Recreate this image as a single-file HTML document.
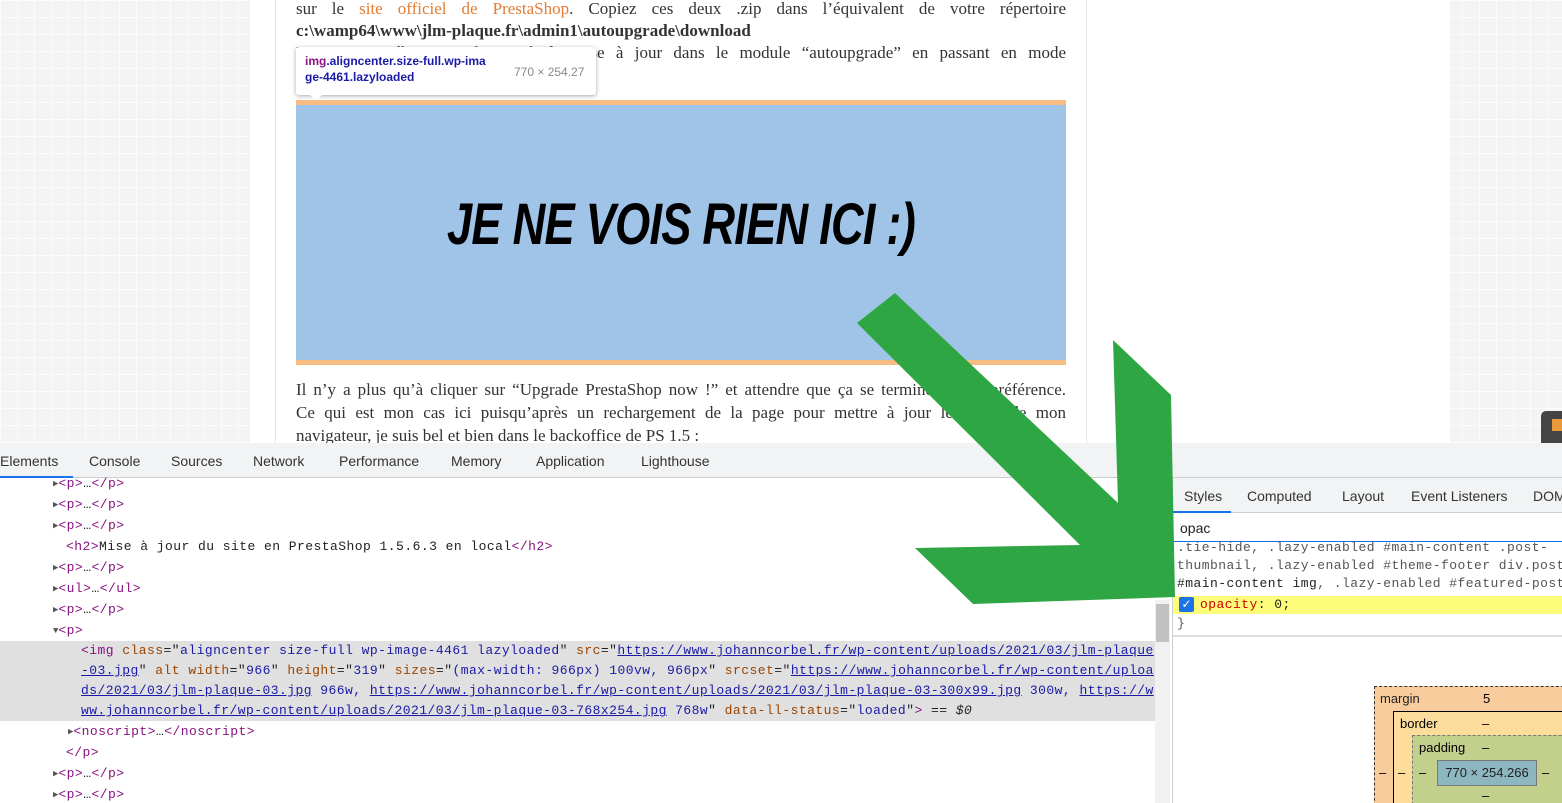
<!DOCTYPE html>
<html><head><meta charset="utf-8">
<style>
*{margin:0;padding:0;box-sizing:border-box}
html,body{width:1562px;height:803px;overflow:hidden}
body{position:relative;font-family:"Liberation Sans",sans-serif;
background-color:#f4f4f4;
background-image:linear-gradient(90deg,rgba(255,255,255,.7) 1px,transparent 1px),linear-gradient(rgba(255,255,255,.7) 1px,transparent 1px);
background-size:17px 17px;}
.abs{position:absolute}
.col{left:250px;top:0;width:1200px;height:443px;background:#fff}
.card{left:275px;top:0;width:812px;height:443px;border-left:1px solid #e4e4e4;border-right:1px solid #e4e4e4;background:#fff}
.ser{font-family:"Liberation Serif",serif;font-size:17px;color:#333;line-height:23px;left:296px;width:770px;text-align:justify;text-align-last:justify;white-space:nowrap}
.img{left:296px;top:100px;width:770px;height:265px;background:#9fc4e8;border-top:5px solid #f6bc82;border-bottom:5px solid #f6bc82;overflow:hidden}
.img span{position:absolute;left:0;right:0;top:86px;text-align:center;font:italic bold 58px "Liberation Sans",sans-serif;letter-spacing:-1px;color:#000;transform:scaleX(.78)}
.tip{left:296px;top:47px;width:300px;height:48px;background:#fff;border-radius:3px;box-shadow:0 1px 4px rgba(0,0,0,.35);font-size:12px;line-height:16px;padding:6px 9px}
.dev{left:0;top:443px;width:1562px;height:360px;background:#fff;border-top:1px solid #cbcdd1}
.tabs{left:0;top:443px;width:1562px;height:35px;background:#f1f3f4;border-bottom:1px solid #cbcdd1;font-size:14px;color:#333}
.tabs span{position:absolute;top:10px}
.el{font-family:"Liberation Mono",monospace;font-size:13px;letter-spacing:.45px;color:#222;line-height:21px;white-space:nowrap}
.rows>div{height:21px;line-height:21px}
.rows>div.hl{height:80px;line-height:20px}
.tag{color:#881280}.an{color:#994500}.av{color:#1a1aa6}.lk{color:#1a1aa6;text-decoration:underline}
.tri{font-size:9px;color:#555;letter-spacing:0;line-height:10px;vertical-align:1px}
.side{left:1172px;top:478px;width:390px;height:325px;border-left:1px solid #cbcdd1;background:#fff;overflow:hidden}
</style></head><body>
<div class="abs col"></div>
<div class="abs card"></div>
<div class="abs" style="left:1541px;top:411px;width:21px;height:32px;background:#444;border-radius:5px 0 0 0"></div>
<div class="abs" style="left:1552px;top:419px;width:10px;height:12px;background:#e99a3c"></div>

<div class="abs ser" style="top:-3px">sur le <span style="color:#e57c32">site officiel de PrestaShop</span>. Copiez ces deux .zip dans l’équivalent de votre répertoire</div>
<div class="abs ser" style="top:19px;text-align-last:left;font-weight:bold;color:#333">c:\wamp64\www\jlm-plaque.fr\admin1\autoupgrade\download</div>
<div class="abs ser" style="top:41px">Ensuite on sélectionne le canal de mise à jour dans le module “autoupgrade” en passant en mode</div>
<div class="abs tip"><div style="width:200px;font-weight:bold"><span style="color:#881280">img</span><span style="color:#1a1aa6">.aligncenter.size-full.wp-ima ge-4461.lazyloaded</span></div><div class="abs" style="left:218px;top:17px;color:#888;font-size:12px">770 × 254.27</div></div>
<div class="abs" style="left:309px;top:94px;width:0;height:0;border-left:7px solid transparent;border-right:7px solid transparent;border-top:7px solid #fff"></div>
<div class="abs img"><span>JE NE VOIS RIEN ICI :)</span></div>
<div class="abs ser" style="top:378px">Il n’y a plus qu’à cliquer sur “Upgrade PrestaShop now !” et attendre que ça se termine. Selon préférence.</div>
<div class="abs ser" style="top:401px">Ce qui est mon cas ici puisqu’après un rechargement de la page pour mettre à jour le cache de mon</div>
<div class="abs ser" style="top:424px;text-align-last:left">navigateur, je suis bel et bien dans le backoffice de PS 1.5 :</div>

<div class="abs dev"></div>
<div class="abs tabs">
<span style="left:0">Elements</span><span style="left:89px">Console</span><span style="left:171px">Sources</span><span style="left:253px">Network</span><span style="left:339px">Performance</span><span style="left:451px">Memory</span><span style="left:536px">Application</span><span style="left:641px">Lighthouse</span>
<div class="abs" style="left:0;top:33px;width:73px;height:2px;background:#1a73e8"></div>
</div>

<div class="abs el rows" style="left:0;top:473px;width:1155px;height:330px;overflow:hidden">
<div style="padding-left:53px"><span class="tri">▶</span><span class="tag">&lt;p&gt;</span>…<span class="tag">&lt;/p&gt;</span></div>
<div style="padding-left:53px"><span class="tri">▶</span><span class="tag">&lt;p&gt;</span>…<span class="tag">&lt;/p&gt;</span></div>
<div style="padding-left:53px"><span class="tri">▶</span><span class="tag">&lt;p&gt;</span>…<span class="tag">&lt;/p&gt;</span></div>
<div style="padding-left:66px"><span class="tag">&lt;h2&gt;</span>Mise à jour du site en PrestaShop 1.5.6.3 en local<span class="tag">&lt;/h2&gt;</span></div>
<div style="padding-left:53px"><span class="tri">▶</span><span class="tag">&lt;p&gt;</span>…<span class="tag">&lt;/p&gt;</span></div>
<div style="padding-left:53px"><span class="tri">▶</span><span class="tag">&lt;ul&gt;</span>…<span class="tag">&lt;/ul&gt;</span></div>
<div style="padding-left:53px"><span class="tri">▶</span><span class="tag">&lt;p&gt;</span>…<span class="tag">&lt;/p&gt;</span></div>
<div style="padding-left:53px"><span class="tri">▼</span><span class="tag">&lt;p&gt;</span></div>
<div class="hl" style="background:#e0e0e0;padding-left:81px;overflow:hidden"><span class="tag">&lt;img</span> <span class="an">class</span>="<span class="av">aligncenter size-full wp-image-4461 lazyloaded</span>" <span class="an">src</span>="<span class="lk">https://www.johanncorbel.fr/wp-content/uploads/2021/03/jlm-plaque</span><br><span class="lk">-03.jpg</span>" <span class="an">alt</span> <span class="an">width</span>="<span class="av">966</span>" <span class="an">height</span>="<span class="av">319</span>" <span class="an">sizes</span>="<span class="av">(max-width: 966px) 100vw, 966px</span>" <span class="an">srcset</span>="<span class="lk">https://www.johanncorbel.fr/wp-content/uploa</span><br><span class="lk">ds/2021/03/jlm-plaque-03.jpg</span><span class="av"> 966w, </span><span class="lk">https://www.johanncorbel.fr/wp-content/uploads/2021/03/jlm-plaque-03-300x99.jpg</span><span class="av"> 300w, </span><span class="lk">https://w</span><br><span class="lk">ww.johanncorbel.fr/wp-content/uploads/2021/03/jlm-plaque-03-768x254.jpg</span><span class="av"> 768w</span>" <span class="an">data-ll-status</span>="<span class="av">loaded</span>"<span class="tag">&gt;</span> == <i>$0</i></div>
<div style="padding-left:68px"><span class="tri">▶</span><span class="tag">&lt;noscript&gt;</span>…<span class="tag">&lt;/noscript&gt;</span></div>
<div style="padding-left:66px"><span class="tag">&lt;/p&gt;</span></div>
<div style="padding-left:53px"><span class="tri">▶</span><span class="tag">&lt;p&gt;</span>…<span class="tag">&lt;/p&gt;</span></div>
<div style="padding-left:53px"><span class="tri">▶</span><span class="tag">&lt;p&gt;</span>…<span class="tag">&lt;/p&gt;</span></div>
</div>
<div class="abs" style="left:1155px;top:600px;width:15px;height:203px;background:#f1f1f1"></div>
<div class="abs" style="left:1156px;top:604px;width:13px;height:38px;background:#c1c1c1"></div>

<div class="abs side">
<div class="abs" style="left:0;top:0;width:390px;height:35px;background:#f1f3f4;border-bottom:1px solid #cbcdd1;font-size:14px;color:#333">
<span class="abs" style="left:11px;top:10px">Styles</span><span class="abs" style="left:74px;top:10px">Computed</span><span class="abs" style="left:169px;top:10px">Layout</span><span class="abs" style="left:238px;top:10px">Event Listeners</span><span class="abs" style="left:360px;top:10px">DOM</span>
<div class="abs" style="left:0;top:33px;width:58px;height:2px;background:#1a73e8"></div>
</div>
<div class="abs" style="left:0;top:36px;width:390px;height:28px;border-bottom:1px solid #1a73e8;font-size:14px;padding:6px 7px;color:#222">opac</div>
<div class="abs el" style="left:4px;top:61px;line-height:18px;color:#555">.tie-hide, .lazy-enabled #main-content .post-<br>thumbnail, .lazy-enabled #theme-footer div.post<br><span style="color:#222">#main-content img</span>, .lazy-enabled #featured-post</div>
<div class="abs" style="left:0;top:118px;width:390px;height:18px;background:#fdfd7b"></div>
<div class="abs" style="left:6px;top:119px;width:15px;height:15px;background:#1a73e8;border-radius:2px;color:#fff;font-size:12px;line-height:15px;text-align:center">✓</div>
<div class="abs el" style="left:27px;top:117px;line-height:20px"><span style="color:#c80000">opacity</span>: 0;</div>
<div class="abs el" style="left:4px;top:136px;line-height:20px;color:#555">}</div>
<div class="abs" style="left:0;top:157px;width:390px;height:2px;background:#ddd"></div>
<div class="abs" style="left:201px;top:208px;width:200px;height:130px;background:#f9cc9d;border:1px dashed #333"></div>
<div class="abs" style="left:207px;top:213px;font-size:13px;color:#222">margin</div>
<div class="abs" style="left:310px;top:213px;font-size:13px">5</div>
<div class="abs" style="left:220px;top:233px;width:200px;height:100px;background:#fddd9b;border:1px solid #000"></div>
<div class="abs" style="left:227px;top:238px;font-size:13px">border</div>
<div class="abs" style="left:309px;top:238px;font-size:13px">–</div>
<div class="abs" style="left:239px;top:257px;width:200px;height:80px;background:#c3d08b;border:1px dashed #777"></div>
<div class="abs" style="left:246px;top:262px;font-size:13px">padding</div>
<div class="abs" style="left:309px;top:262px;font-size:13px">–</div>
<div class="abs" style="left:264px;top:282px;width:100px;height:26px;background:#8cb6c0;border:1px solid #777;font-size:13px;text-align:center;line-height:24px;color:#222">770 × 254.266</div>
<div class="abs" style="left:206px;top:287px;font-size:13px">–</div>
<div class="abs" style="left:225px;top:287px;font-size:13px">–</div>
<div class="abs" style="left:246px;top:287px;font-size:13px">–</div>
<div class="abs" style="left:369px;top:287px;font-size:13px">–</div>
<div class="abs" style="left:309px;top:310px;font-size:13px">–</div>
</div>

<svg class="abs" style="left:0;top:0" width="1562" height="803"><polygon fill="#2ea643" points="895,293 1118,503 1113,340 1171,395 1175,597 973,604 915,548 1080,545 857,323"/></svg>
</body></html>
